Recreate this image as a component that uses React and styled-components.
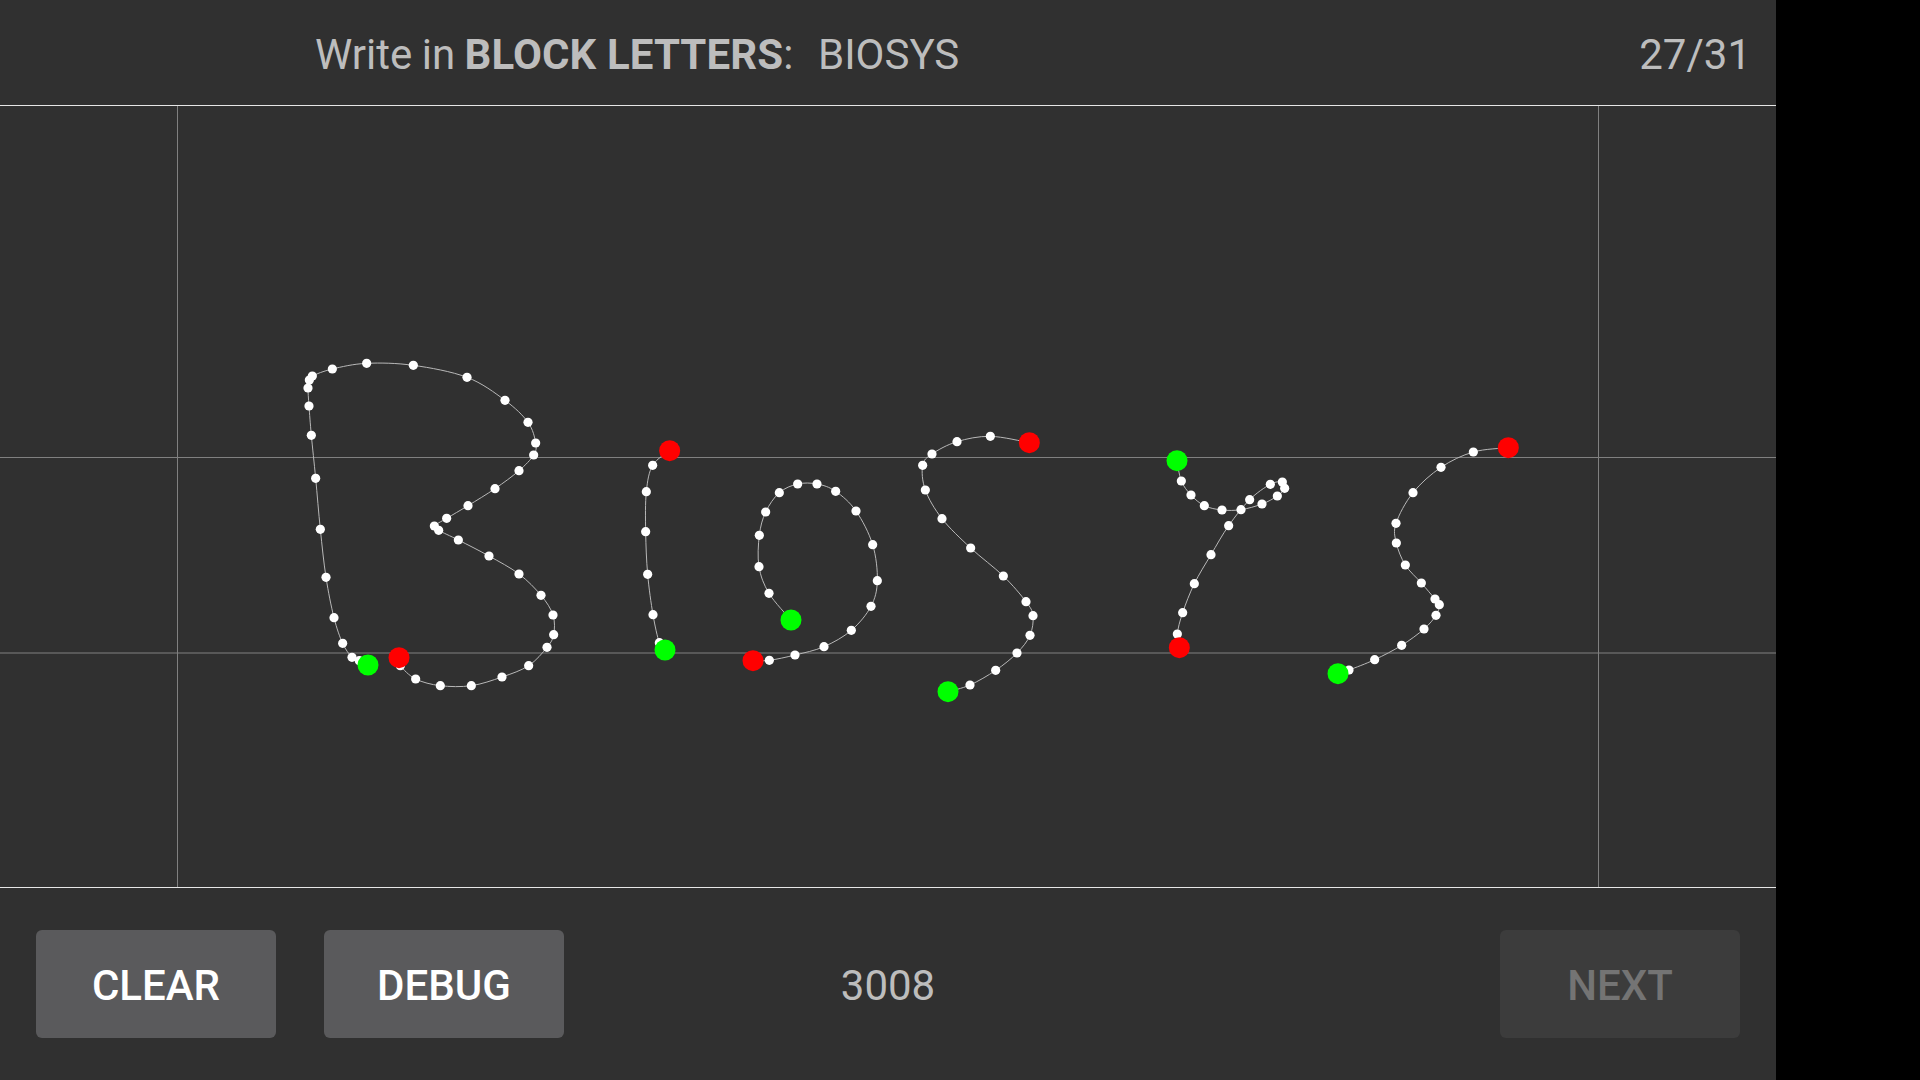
import React from 'react'
import styled, { createGlobalStyle } from 'styled-components'

const GlobalStyle = createGlobalStyle`
  html, body {
    margin: 0;
    padding: 0;
    background: #000;
    font-family: Roboto, "Liberation Sans", sans-serif;
  }
`

// points were read off crops at 3x, so each stroke keeps its crop origin
const fromCrop = (ox, oy, pts) => pts.map(([x, y]) => [ox + x / 3, oy + y / 3])

const strokes = [
  fromCrop(280, 340, [
    [264, 975], [238, 962], [216, 952], [188, 910], [162, 833], [138, 712], [121, 568], [107, 415],
    [94, 286], [87, 198], [84, 144], [88, 120], [97, 108], [157, 87], [260, 70], [400, 76],
    [561, 112], [675, 181], [744, 247], [767, 309], [761, 345], [717, 392], [645, 446], [564, 497],
    [500, 535], [463, 558], [476, 571], [535, 600], [627, 648], [717, 702], [783, 766], [819, 825],
    [821, 884], [801, 922], [746, 977], [666, 1011], [574, 1037], [481, 1037], [407, 1017], [361, 977],
    [357, 953],
  ]),
  fromCrop(600, 420, [
    [195, 690], [178, 668], [159, 584], [143, 463], [137, 335], [139, 215], [158, 136], [209, 92],
  ]),
  fromCrop(600, 420, [
    [573, 600], [507, 520], [477, 440], [478, 346], [497, 276], [538, 218], [593, 192], [651, 192],
    [707, 214], [768, 273], [818, 374], [832, 482], [813, 559], [754, 631], [672, 680], [585, 705],
    [508, 721], [459, 722],
  ]),
  fromCrop(900, 420, [
    [144, 815], [210, 795], [287, 751], [351, 699], [390, 646], [399, 587], [378, 545], [310, 468],
    [212, 384], [126, 296], [76, 210], [68, 136], [96, 102], [171, 65], [271, 49], [388, 68],
  ]),
  fromCrop(1150, 430, [
    [81, 92], [94, 153], [123, 195], [163, 227], [216, 240], [273, 239], [336, 222], [382, 198],
    [404, 175], [397, 156], [361, 163], [299, 209], [236, 287], [183, 374], [133, 461], [98, 548],
    [82, 612], [88, 653],
  ]),
  fromCrop(1150, 430, [
    [564, 731], [597, 720], [674, 689], [755, 646], [822, 597], [858, 556], [868, 524], [855, 507],
    [814, 459], [766, 405], [739, 339], [738, 280], [789, 188], [873, 112], [970, 66], [1075, 53],
  ]),
]

// catmull-rom through the samples, same look as the smoothed ink
const smoothPath = (pts) => {
  let d = `M${pts[0][0]} ${pts[0][1]}`
  for (let i = 0; i < pts.length - 1; i++) {
    const p0 = pts[i - 1] || pts[i]
    const p1 = pts[i]
    const p2 = pts[i + 1]
    const p3 = pts[i + 2] || p2
    const c1x = p1[0] + (p2[0] - p0[0]) / 6
    const c1y = p1[1] + (p2[1] - p0[1]) / 6
    const c2x = p2[0] - (p3[0] - p1[0]) / 6
    const c2y = p2[1] - (p3[1] - p1[1]) / 6
    d += ` C${c1x} ${c1y} ${c2x} ${c2y} ${p2[0]} ${p2[1]}`
  }
  return d
}

const Screen = styled.div`
  width: 1776px;
  height: 1080px;
  background: #303030;
  display: flex;
  flex-direction: column;
  color: #bdbdbd;
  overflow: hidden;
`

const Header = styled.header`
  height: 105px;
  box-sizing: border-box;
  flex: none;
  display: flex;
  align-items: center;
  justify-content: space-between;
  padding: 4px 25px 0 315px;
  font-size: 42px;
`

const Rule = styled.div`
  height: 1px;
  flex: none;
  background: #e6e6e6;
`

const Prompt = styled.div`
  white-space: nowrap;
  word-spacing: -1px;
`

const Emphasis = styled.b`
  word-spacing: 0;
  letter-spacing: 0.1px;
`

const Target = styled.span`
  margin-left: 24.7px;
`

const Counter = styled.div`
  white-space: nowrap;
`

const Canvas = styled.svg`
  display: block;
  flex: none;
  width: 1776px;
  height: 781px;
`

const Footer = styled.footer`
  flex: 1;
  display: grid;
  grid-template-columns: 1fr auto 1fr;
  align-items: center;
  padding: 0 36px;
`

const ButtonGroup = styled.div`
  display: flex;
  gap: 48px;
  justify-content: ${(p) => (p.$end ? 'flex-end' : 'flex-start')};
`

const Button = styled.button`
  width: 240px;
  height: 108px;
  border: 0;
  border-radius: 6px;
  padding: 2px 0 0;
  background: ${(p) => (p.disabled ? '#3c3c3c' : '#5a5a5c')};
  color: ${(p) => (p.disabled ? '#747474' : '#ffffff')};
  font-family: Roboto, "Liberation Sans", sans-serif;
  font-size: 42px;
  font-weight: 500;
`

const Count = styled.div`
  font-size: 42px;
  padding-top: 2px;
`

function Ink() {
  return (
    <Canvas viewBox="0 106 1776 781">
      <g stroke="#808080" strokeWidth="1">
        <line x1="177.5" y1="106" x2="177.5" y2="887" />
        <line x1="1598.5" y1="106" x2="1598.5" y2="887" />
        <line x1="0" y1="457.5" x2="1776" y2="457.5" />
        <line x1="0" y1="653" x2="1776" y2="653" />
      </g>
      {strokes.map((pts, i) => (
        <g key={i}>
          <path d={smoothPath(pts)} fill="none" stroke="#b8b8b8" strokeWidth="1" />
          {pts.slice(1, -1).map(([x, y], j) => (
            <circle key={j} cx={x} cy={y} r="4.6" fill="#fff" />
          ))}
          <circle cx={pts[0][0]} cy={pts[0][1]} r="10.5" fill="#00ff00" />
          <circle cx={pts[pts.length - 1][0]} cy={pts[pts.length - 1][1]} r="10.5" fill="#ff0000" />
        </g>
      ))}
    </Canvas>
  )
}

export default function App() {
  return (
    <>
      <GlobalStyle />
      <Screen>
        <Header>
          <Prompt>
            Write in <Emphasis>BLOCK LETTERS</Emphasis>:<Target>BIOSYS</Target>
          </Prompt>
          <Counter>27/31</Counter>
        </Header>
        <Rule />
        <Ink />
        <Rule />
        <Footer>
          <ButtonGroup>
            <Button>CLEAR</Button>
            <Button>DEBUG</Button>
          </ButtonGroup>
          <Count>3008</Count>
          <ButtonGroup $end>
            <Button disabled>NEXT</Button>
          </ButtonGroup>
        </Footer>
      </Screen>
    </>
  )
}
